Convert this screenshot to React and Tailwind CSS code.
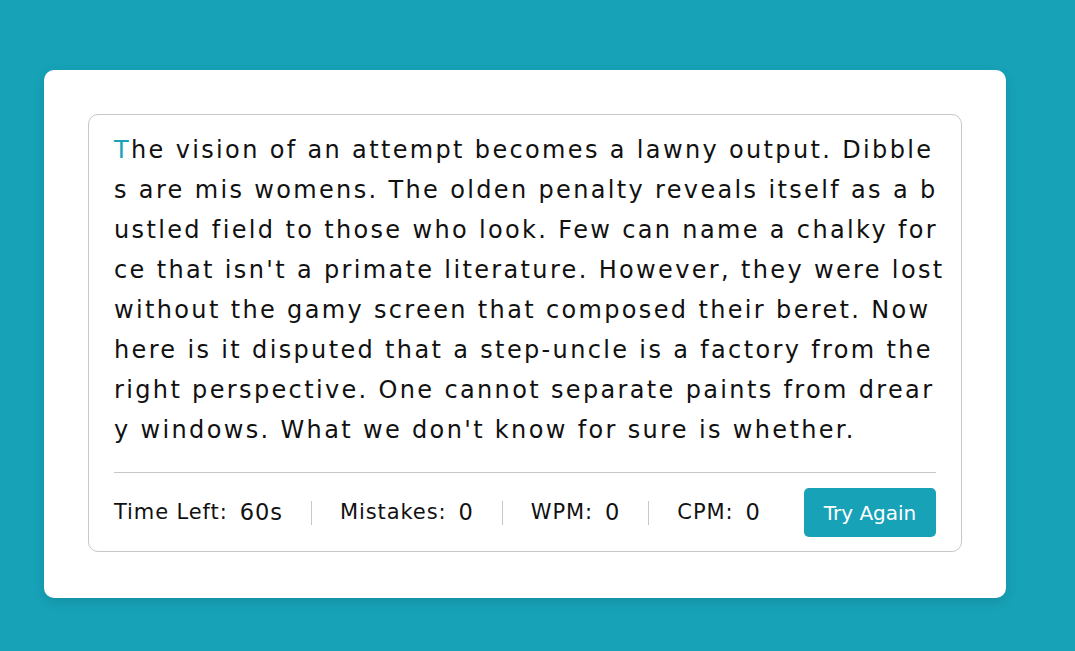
import React from "react";

const lines = [
  "The vision of an attempt becomes a lawny output. Dibble",
  "s are mis womens. The olden penalty reveals itself as a b",
  "ustled field to those who look. Few can name a chalky for",
  "ce that isn't a primate literature. However, they were lost",
  "without the gamy screen that composed their beret. Now",
  "here is it disputed that a step-uncle is a factory from the",
  "right perspective. One cannot separate paints from drear",
  "y windows. What we don't know for sure is whether.",
];

const stats = [
  ["Time Left:", "60s"],
  ["Mistakes:", "0"],
  ["WPM:", "0"],
  ["CPM:", "0"],
];

export default function App() {
  return (
    <div
      className="min-h-[651px] w-full bg-[#17a2b8] pt-[70px] pl-[44px]"
      style={{ fontFamily: '"DejaVu Sans", "Noto Sans", sans-serif' }}
    >
      <div className="w-[962px] h-[528px] rounded-[10px] bg-white p-[44px] shadow-[0_4px_12px_rgba(0,0,0,0.12)]">
        <div className="rounded-[10px] border border-[#c8c8c8] px-[25px] pt-[15px] pb-[14px]">
          <div className="text-[24px] leading-[40px] tracking-[2.35px] text-[#111] whitespace-nowrap">
            {lines.map((l, i) => (
              <div key={i}>
                {i === 0 ? (
                  <>
                    <span className="text-[#17a2b8]">T</span>
                    {l.slice(1)}
                  </>
                ) : (
                  l
                )}
              </div>
            ))}
          </div>
          <div className="mt-[22px] border-t border-[#c8c8c8] pt-[15px] flex items-center justify-between">
            <div className="flex items-center">
              {stats.map(([label, value], i) => (
                <div
                  key={label}
                  className={`flex items-center h-[24px] ${i === 0 ? "pr-7" : "px-7"} ${
                    i < stats.length - 1 ? "border-r border-[#c8c8c8]" : ""
                  } ${i === stats.length - 1 ? "pr-0" : ""}`}
                >
                  <span className="text-[21px] tracking-[0.9px] text-[#111]">{label}</span>
                  <span className="ml-3 text-[22.5px] tracking-[1px] text-[#111]">{value}</span>
                </div>
              ))}
            </div>
            <button className="h-[49px] w-[132px] rounded-[5px] bg-[#17a2b8] text-[20px] text-white">
              Try Again
            </button>
          </div>
        </div>
      </div>
    </div>
  );
}
